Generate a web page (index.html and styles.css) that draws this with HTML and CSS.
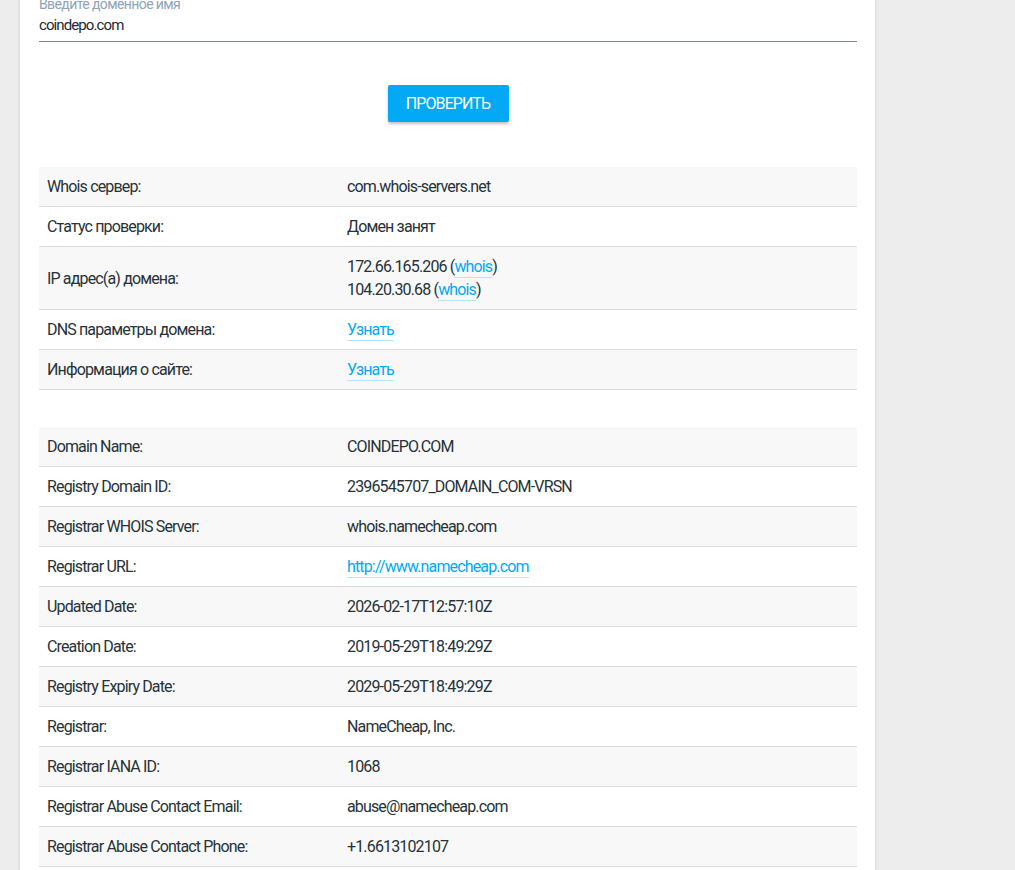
FILE: index.html
```html
<!DOCTYPE html>
<html lang="ru">
  <head>
    <meta charset="UTF-8" />
    <title>Whois проверка домена</title>
    <link rel="stylesheet" href="styles.css">
  </head>
  <body>
    <div class="page">
      <div class="card">
        <form class="check-form">
          <div class="field">
            <label for="domain">Введите доменное имя</label>
            <input type="text" id="domain" value="coindepo.com" />
          </div>
          <div class="actions">
            <button type="button" class="check-button">Проверить</button>
          </div>
        </form>

        <table class="info-table">
          <tr>
            <td>Whois сервер:</td>
            <td>com.whois-servers.net</td>
          </tr>
          <tr>
            <td>Статус проверки:</td>
            <td>Домен занят</td>
          </tr>
          <tr>
            <td>IP адрес(а) домена:</td>
            <td>
              172.66.165.206 (<a href="#">whois</a>)<br />
              104.20.30.68 (<a href="#">whois</a>)
            </td>
          </tr>
          <tr>
            <td>DNS параметры домена:</td>
            <td><a href="#">Узнать</a></td>
          </tr>
          <tr>
            <td>Информация о сайте:</td>
            <td><a href="#">Узнать</a></td>
          </tr>
        </table>

        <table class="info-table">
          <tr><td>Domain Name:</td><td>COINDEPO.COM</td></tr>
          <tr><td>Registry Domain ID:</td><td>2396545707_DOMAIN_COM-VRSN</td></tr>
          <tr><td>Registrar WHOIS Server:</td><td>whois.namecheap.com</td></tr>
          <tr><td>Registrar URL:</td><td><a href="#">http://www.namecheap.com</a></td></tr>
          <tr><td>Updated Date:</td><td>2026-02-17T12:57:10Z</td></tr>
          <tr><td>Creation Date:</td><td>2019-05-29T18:49:29Z</td></tr>
          <tr><td>Registry Expiry Date:</td><td>2029-05-29T18:49:29Z</td></tr>
          <tr><td>Registrar:</td><td>NameCheap, Inc.</td></tr>
          <tr><td>Registrar IANA ID:</td><td>1068</td></tr>
          <tr><td>Registrar Abuse Contact Email:</td><td>abuse@namecheap.com</td></tr>
          <tr><td>Registrar Abuse Contact Phone:</td><td>+1.6613102107</td></tr>
        </table>
      </div>
    </div>
  </body>
</html>
```

FILE: styles.css
```css
body {
  margin: 0;
  background-color: #ededed;
  font-family: Roboto, 'Liberation Sans', sans-serif;
  color: #263238;
  overflow: hidden;
}
.page {
  padding-left: 20px;
}
.card {
  width: 818px;
  padding: 0 18px 40px 19px;
  margin-top: -5px;
  background-color: #fff;
  box-shadow: 0 0 3px rgba(0, 0, 0, 0.15);
}
.field {
  display: flex;
  flex-direction: column;
}
.field label {
  font-size: 14px;
  line-height: 18px;
  color: #8ea4b8;
  letter-spacing: -0.6px;
}
.field input {
  border: none;
  border-bottom: 1px solid #7b878c;
  padding: 3px 0 7px;
  font-family: inherit;
  font-size: 15px;
  letter-spacing: -0.9px;
  color: #1c2a33;
  outline: none;
}
.actions {
  display: flex;
  justify-content: center;
  padding: 43px 0 45px;
}
.check-button {
  width: 121px;
  height: 37px;
  border: none;
  border-radius: 2px;
  background-color: #03a9f4;
  color: #fff;
  font-family: inherit;
  font-size: 16px;
  letter-spacing: -0.9px;
  text-transform: uppercase;
  box-shadow: 0 2px 3px rgba(0, 0, 0, 0.25);
  cursor: pointer;
}
.info-table {
  width: 100%;
  border-collapse: collapse;
  font-size: 16px;
  line-height: 23px;
  letter-spacing: -0.85px;
  margin-bottom: 37px;
}
.info-table td {
  padding: 8px 8px;
  border-bottom: 1px solid #dcdcdc;
  vertical-align: middle;
}
.info-table td:first-child {
  width: 284px;
}
.info-table tr:nth-child(odd) {
  background-color: #f8f8f8;
}
.info-table a {
  color: #03a9f4;
  text-decoration: none;
  border-bottom: 1px solid #b3e5fc;
  padding-bottom: 1px;
}
```
